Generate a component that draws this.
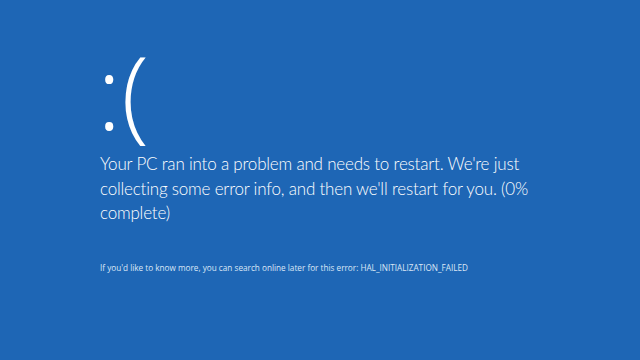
export default function App() {
  return (
    <div className="w-[640px] h-[360px] bg-[#1e66b5] text-white font-['Lato',sans-serif] overflow-hidden">
      <div className="pl-[100px] pt-[30px]">
        <div className="ml-[-3px] h-[122px] text-[102px] leading-[122px] font-light font-['Open_Sans',sans-serif]">:(</div>
        <div className="w-[440px] text-[17px] leading-[24.5px] font-light tracking-[-0.2px]">
          Your PC ran into a problem and needs to restart. We're just collecting some error info, and then we'll restart for you. (0% complete)
        </div>
        <div className="mt-[36px] text-[8.2px] leading-[12px] text-[#dbe7f5] font-['Open_Sans',sans-serif]">
          If you'd like to know more, you can search online later for this error: HAL_INITIALIZATION_FAILED
        </div>
      </div>
    </div>
  );
}
